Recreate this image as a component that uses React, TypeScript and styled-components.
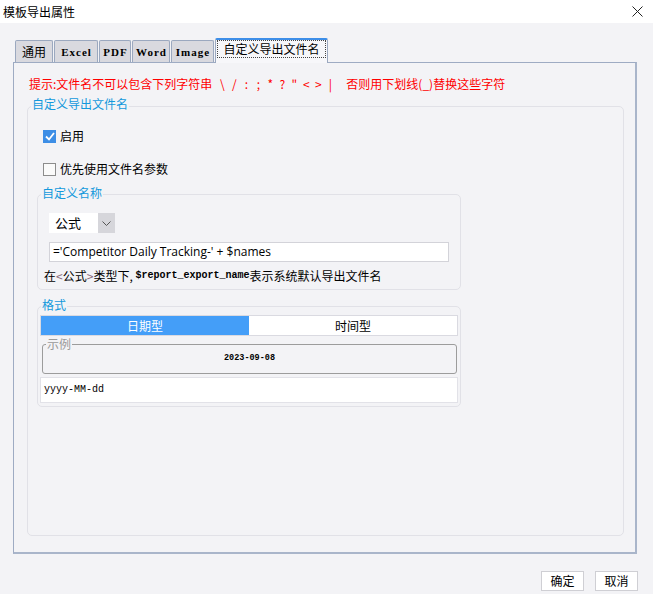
import React from "react";
import styled, { createGlobalStyle, css } from "styled-components";

const GlobalStyle = createGlobalStyle`
  html, body {
    margin: 0;
    padding: 0;
    background: #f3f3f6;
  }
  body {
    font-family: "Noto Sans CJK SC", "Noto Sans", sans-serif;
    font-size: 12px;
    color: #000;
  }
  * {
    box-sizing: border-box;
  }
`;

const colors = {
  bg: "#f3f3f6",
  legend: "#1399dc",
  groupLine: "#e1e1e7",
  frame: "#9eabc3",
  tab: "#d9d9df",
  blue: "#449ef8",
  red: "#ff0000",
};

const Window = styled.div`
  width: 653px;
  height: 594px;
  display: flex;
  flex-direction: column;
  background: ${colors.bg};
  overflow: hidden;
`;

const TitleBar = styled.div`
  height: 23px;
  flex: none;
  background: #fff;
  display: flex;
  align-items: center;
  justify-content: space-between;
  padding: 0 10px 0 3px;
  line-height: 16px;
`;

const TabStrip = styled.div`
  display: flex;
  align-items: flex-end;
  gap: 1px;
  height: 25px;
  margin: 15px 0 -1px 15px;
  position: relative;
  z-index: 1;
`;

const Tab = styled.div<{ $w: number; $active?: boolean; $mono?: boolean }>`
  width: ${({ $w }) => $w}px;
  height: 22px;
  margin-bottom: 1px;
  border: 1px solid #9ba8bf;
  border-bottom: none;
  border-radius: 2px 2px 0 0;
  background: ${colors.tab};
  display: flex;
  align-items: center;
  justify-content: center;
  line-height: 16px;
  ${({ $mono }) =>
    $mono &&
    css`
      font-family: "Liberation Serif", serif;
      font-weight: bold;
      font-size: 11px;
      letter-spacing: 1px;
      padding-left: 1px;
    `}
  ${({ $active }) =>
    $active &&
    css`
      height: 25px;
      margin-bottom: 0;
      background: #f7f7fa;
      border-top: 2px solid #3d8ee8;
      padding: 0 1px 5px 1px;
      align-items: stretch;
    `}
`;

const FocusRing = styled.span`
  flex: 1;
  border: 1px dotted #444;
  display: flex;
  align-items: center;
  justify-content: center;
  font-size: 12px;
`;

const Panel = styled.div`
  margin-left: 13px;
  width: 624px;
  height: 492px;
  flex: none;
  border: 1px solid ${colors.frame};
  border-right: 2px solid #a9b5ca;
  border-bottom: 2px solid #a9b5ca;
  display: flex;
  flex-direction: column;
  padding: 13px 11px 16px 13px;
`;

const Hint = styled.div`
  color: ${colors.red};
  line-height: 16px;
  margin-left: 2px;
  display: flex;
  white-space: nowrap;
`;

const HintChar = styled.span`
  width: 12px;
  text-align: center;
`;

const HintChars = styled.span`
  display: flex;
  margin: 0 10px 0 4px;
`;

const Group = styled.div<{ $inner?: boolean }>`
  border: 1px solid ${colors.groupLine};
  border-radius: 5px;
  display: flex;
  flex-direction: column;
  ${({ $inner }) =>
    $inner &&
    css`
      width: 424px;
      margin: 16px 0 0 9px;
    `}
`;

const Legend = styled.div<{ $top: number; $gray?: boolean }>`
  align-self: flex-start;
  height: 16px;
  line-height: 16px;
  color: ${({ $gray }) => ($gray ? "#9a9a9a" : colors.legend)};
  background: ${colors.bg};
  padding: 0 1px;
  margin: ${({ $top }) => $top}px 0 0 3px;
`;

const OuterGroup = styled(Group)`
  flex: 1;
  margin-top: 14px;
`;

const CheckRow = styled.label<{ $top: number }>`
  display: flex;
  align-items: center;
  gap: 4px;
  height: 16px;
  line-height: 16px;
  margin: ${({ $top }) => $top}px 0 0 15px;
`;

const Box = styled.span<{ $checked?: boolean }>`
  width: 13px;
  height: 13px;
  display: flex;
  align-items: center;
  justify-content: center;
  border: 1px solid ${({ $checked }) => ($checked ? "#3d8ee6" : "#8c8c8c")};
  background: ${({ $checked }) => ($checked ? "#3d8ee6" : "#fafafa")};
`;

const NameBody = styled.div`
  display: flex;
  flex-direction: column;
  padding: 0 0 5px 11px;
`;

const Select = styled.div`
  margin-top: 12px;
  width: 66px;
  height: 20px;
  display: flex;
  background: #fff;
`;

const SelectText = styled.span`
  flex: 1;
  padding-left: 6px;
  line-height: 20px;
  font-size: 13px;
`;

const SelectArrow = styled.span`
  width: 17px;
  background: #d6d6db;
  display: flex;
  align-items: center;
  justify-content: center;
`;

const Input = styled.div`
  margin-top: 9px;
  width: 400px;
  height: 20px;
  background: #fff;
  border: 1px solid #d3d3d9;
  padding-left: 3px;
  line-height: 18px;
  font-size: 12px;
  font-family: "Open Sans", "Noto Sans CJK SC", sans-serif;
  white-space: nowrap;
`;

const Note = styled.div`
  margin: 6px 0 0 -5px;
  height: 16px;
  line-height: 16px;
  white-space: nowrap;
  display: flex;
  align-items: center;
`;

const Mono = styled.span`
  font-family: "Liberation Mono", monospace;
  font-weight: bold;
  font-size: 10px;
  line-height: 16px;
`;

const Bracket = styled.span`
  color: #8a6a7a;
`;

const Segments = styled.div`
  margin: 2px 2px 0 2px;
  height: 21px;
  display: flex;
  border: 1px solid #dadae1;
  background: #fff;
`;

const Segment = styled.div<{ $active?: boolean }>`
  flex: 1;
  display: flex;
  align-items: center;
  justify-content: center;
  font-size: 12px;
  background: ${({ $active }) => ($active ? colors.blue : "#fff")};
  color: ${({ $active }) => ($active ? "#fff" : "#000")};
`;

const Sample = styled.div`
  margin: 8px 3px 0 4px;
  height: 30px;
  border: 1px solid #9c9c9c;
  border-radius: 3px;
  display: flex;
  flex-direction: column;
`;

const SampleDate = styled.div`
  text-align: center;
  font-family: "Liberation Mono", monospace;
  font-weight: bold;
  font-size: 8.5px;
  line-height: 12px;
`;

const Pattern = styled.div`
  margin: 3px 2px 3px 2px;
  height: 26px;
  background: #fff;
  border: 1px solid #e2e2e8;
  padding-left: 3px;
  line-height: 24px;
  font-family: "Liberation Mono", monospace;
  font-size: 10px;
`;

const Footer = styled.div`
  display: flex;
  justify-content: flex-end;
  gap: 11px;
  padding-right: 15px;
  margin-top: 17px;
`;

const Button = styled.button`
  width: 43px;
  height: 20px;
  padding: 0;
  background: #fff;
  border: 1px solid #cfcfd4;
  font-family: inherit;
  font-size: 12px;
  line-height: 16px;
  color: #000;
`;

const hintChars = ["\\", "/", ":", ";", "*", "?", "\"", "<", ">", "|"];

function App() {
  return (
    <Window>
      <GlobalStyle />
      <TitleBar>
        <span>模板导出属性</span>
        <svg width="11" height="11" viewBox="0 0 11 11">
          <path d="M0.5 0.5 L10.5 10.5 M10.5 0.5 L0.5 10.5" stroke="#222" strokeWidth="1" />
        </svg>
      </TitleBar>

      <TabStrip>
        <Tab $w={38}>通用</Tab>
        <Tab $w={44} $mono>Excel</Tab>
        <Tab $w={32} $mono>PDF</Tab>
        <Tab $w={38} $mono>Word</Tab>
        <Tab $w={43} $mono>Image</Tab>
        <Tab $w={113} $active>
          <FocusRing>自定义导出文件名</FocusRing>
        </Tab>
      </TabStrip>

      <Panel>
        <Hint>
          <span>提示:文件名不可以包含下列字符串</span>
          <HintChars>
            {hintChars.map((c) => (
              <HintChar key={c}>{c}</HintChar>
            ))}
          </HintChars>
          <span>否则用下划线(_)替换这些字符</span>
        </Hint>

        <OuterGroup>
          <Legend $top={-11}>自定义导出文件名</Legend>
          <CheckRow $top={16}>
            <Box $checked>
              <svg width="10" height="9" viewBox="0 0 10 9">
                <path d="M1 4.5 L4 7.5 L9 1" stroke="#fff" strokeWidth="1.8" fill="none" />
              </svg>
            </Box>
            启用
          </CheckRow>
          <CheckRow $top={17}>
            <Box />
            优先使用文件名参数
          </CheckRow>

          <Group $inner style={{ marginTop: 17 }}>
            <Legend $top={-10}>自定义名称</Legend>
            <NameBody>
              <Select>
                <SelectText>公式</SelectText>
                <SelectArrow>
                  <svg width="9" height="5" viewBox="0 0 9 5">
                    <path d="M0.5 0.5 L4.5 4.5 L8.5 0.5" stroke="#555" strokeWidth="1" fill="none" />
                  </svg>
                </SelectArrow>
              </Select>
              <Input>='Competitor Daily Tracking-' + $names</Input>
              <Note>
                在<Bracket>&lt;</Bracket>公式<Bracket>&gt;</Bracket>类型下,&nbsp;<Mono>$report_export_name</Mono>
                表示系统默认导出文件名
              </Note>
            </NameBody>
          </Group>

          <Group $inner>
            <Legend $top={-10}>格式</Legend>
            <Segments>
              <Segment $active>日期型</Segment>
              <Segment>时间型</Segment>
            </Segments>
            <Sample>
              <Legend $top={-9} $gray>
                示例
              </Legend>
              <SampleDate>2023-09-08</SampleDate>
            </Sample>
            <Pattern>yyyy-MM-dd</Pattern>
          </Group>
        </OuterGroup>
      </Panel>

      <Footer>
        <Button>确定</Button>
        <Button>取消</Button>
      </Footer>
    </Window>
  );
}

export default App;
